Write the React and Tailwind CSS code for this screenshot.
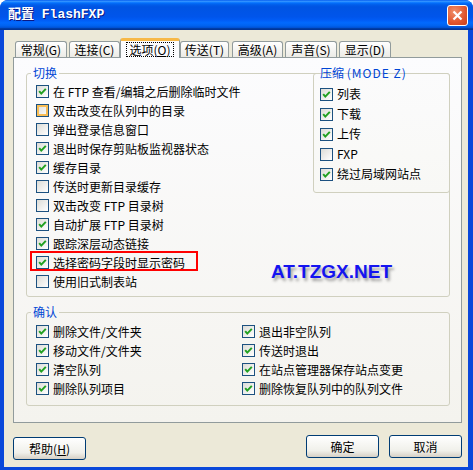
import React from "react";

const switches = [
  { label: "在 FTP 查看/编辑之后删除临时文件", checked: true },
  { label: "双击改变在队列中的目录", checked: false, hot: true },
  { label: "弹出登录信息窗口", checked: false },
  { label: "退出时保存剪贴板监视器状态", checked: true },
  { label: "缓存目录", checked: true },
  { label: "传送时更新目录缓存", checked: false },
  { label: "双击改变 FTP 目录树", checked: false },
  { label: "自动扩展 FTP 目录树", checked: true },
  { label: "跟踪深层动态链接", checked: true },
  { label: "选择密码字段时显示密码", checked: true, marked: true },
  { label: "使用旧式制表站", checked: false },
];

const compress = [
  { label: "列表", checked: true },
  { label: "下载", checked: true },
  { label: "上传", checked: true },
  { label: "FXP", checked: false },
  { label: "绕过局域网站点", checked: true },
];

const confirms = [
  "删除文件/文件夹",
  "退出非空队列",
  "移动文件/文件夹",
  "传送时退出",
  "清空队列",
  "在站点管理器保存站点变更",
  "删除队列项目",
  "删除恢复队列中的队列文件",
];

function Box({ checked, hot }) {
  return (
    <span
      className={`w-[13px] h-[13px] shrink-0 border border-[#1C5180] flex items-center justify-center bg-[linear-gradient(135deg,#DCDCD7,#FFFFFF)] ${
        hot ? "shadow-[inset_0_0_0_2px_#F8BD55]" : ""
      }`}
    >
      {checked && (
        <svg width="11" height="11" viewBox="0 0 11 11">
          <path d="M2.2 5.2 L4.3 7.6 L8.8 2.9" stroke="#21A121" strokeWidth="2" fill="none" />
        </svg>
      )}
    </span>
  );
}

function Row({ label, checked, hot, marked, h = "h-[19px]" }) {
  return (
    <div className={`${h} flex items-center gap-[4px] relative`}>
      <Box checked={checked} hot={hot} />
      <span className="leading-[14px] whitespace-nowrap">{label}</span>
      {/* red annotation box */}
      {marked && <span className="absolute left-[-6px] top-[-2px] w-[168px] h-[20px] border-2 border-[#FF0000]" />}
    </div>
  );
}

function Tab({ children, w, ml, selected }) {
  if (selected) {
    return (
      <div
        className={`${w} ${ml} h-[20px] -mb-[1px] relative z-10 rounded-t-[3px] border-x border-[#919B9C] border-t-[3px] border-t-[#F7B847] bg-[#FCFCFE] flex items-center justify-center`}
      >
        <span className="border border-dotted border-black px-[2px] leading-[13px]">{children}</span>
      </div>
    );
  }
  return (
    <div
      className={`${w} ${ml} h-[16px] rounded-t-[3px] border border-b-0 border-[#919B9C] bg-[linear-gradient(#FFFFFF,#ECEBE6)] flex items-center justify-center leading-[14px]`}
    >
      {children}
    </div>
  );
}

function Button({ children, extra = "" }) {
  return (
    <button
      className={`w-[73px] h-[23px] rounded-[3px] border border-[#003C74] bg-[linear-gradient(#FFFFFF,#F0F0EA_70%,#D6D0C5)] flex items-center justify-center leading-[14px] ${extra}`}
    >
      {children}
    </button>
  );
}

export default function App() {
  return (
    <div className="w-[473px] h-[470px] bg-[#0A48DA] rounded-t-[8px] flex flex-col text-[12px] text-black font-['Noto_Sans_CJK_SC','Noto_Sans',sans-serif]">
      {/* Title bar */}
      <div className="h-[30px] shrink-0 rounded-t-[8px] pl-[8px] pr-[5px] flex items-center justify-between bg-[linear-gradient(to_bottom,#0058EE_0%,#3593FF_4%,#288EFF_6%,#127DFF_8%,#036FFC_10%,#0262EE_14%,#0057E5_20%,#0054E3_24%,#0055EB_56%,#005BF5_66%,#026AFE_76%,#0062EF_86%,#0052D6_92%,#0040AB_94%,#003092_100%)]">
        <span className="text-white font-bold text-[13px] leading-[16px] font-['Liberation_Mono','Noto_Sans_CJK_SC',monospace] [text-shadow:1px_1px_#0A1883]">
          配置 FlashFXP
        </span>
        <span className="w-[21px] h-[21px] rounded-[3px] border border-white bg-[radial-gradient(circle_at_35%_30%,#F0906A,#E0552D_60%,#C8401C)] flex items-center justify-center">
          <svg width="11" height="11" viewBox="0 0 11 11">
            <path d="M1.5 1.5 L9.5 9.5 M9.5 1.5 L1.5 9.5" stroke="white" strokeWidth="2.2" />
          </svg>
        </span>
      </div>

      {/* Dialog body */}
      <div className="flex-1 ml-[4px] mr-[5px] mb-[3px] bg-[#ECE9D8] pt-[8px] pl-[9px] flex flex-col">
        {/* Tabs */}
        <div className="flex items-end h-[19px]">
          <Tab w="w-[52px]" ml="ml-[2px]">常规(G)</Tab>
          <Tab w="w-[51px]" ml="ml-[2px]">连接(C)</Tab>
          <Tab w="w-[60px]" ml="ml-0" selected>
            选项(<u>O</u>)
          </Tab>
          <Tab w="w-[49px]" ml="ml-0">传送(T)</Tab>
          <Tab w="w-[51px]" ml="ml-[3px]">高级(A)</Tab>
          <Tab w="w-[52px]" ml="ml-[2px]">声音(S)</Tab>
          <Tab w="w-[52px]" ml="ml-[2px]">显示(D)</Tab>
        </div>

        {/* Tab page */}
        <div className="w-[449px] h-[366px] border border-[#919B9C] bg-[linear-gradient(#FCFCFE,#F4F3EE)] pt-[8px] px-[12px]">
          {/* 切换 */}
          <div className="relative w-[424px]">
            <fieldset className="border border-[#D0D0BF] rounded-[3px] pl-[9px] pt-[2px] pb-[5px]">
              <legend className="-ml-[5px] px-[2px] leading-[14px] text-[#0046D5]">切换</legend>
              {switches.map((s) => (
                <Row key={s.label} {...s} />
              ))}
            </fieldset>

            {/* 压缩 (MODE Z) */}
            <fieldset className="absolute top-0 right-0 w-[137px] border border-[#D0D0BF] rounded-[3px] pl-[6px] pt-[4px] pb-[8px] bg-[linear-gradient(#FBFBFC,#F8F8F5)]">
              <legend className="-ml-[2px] px-[2px] leading-[14px] text-[#0046D5] whitespace-nowrap">
                压缩 <span className="tracking-[1px]">(MODE Z)</span>
              </legend>
              {compress.map((c) => (
                <Row key={c.label} {...c} h="h-[20px]" />
              ))}
            </fieldset>

            {/* watermark */}
            <span className="absolute left-[245px] top-[196px] text-[19px] leading-[19px] font-bold font-['Liberation_Sans',sans-serif] text-[#1414F0] [text-shadow:2px_3px_3px_rgba(0,0,0,0.35)]">
              AT.TZGX.NET
            </span>
          </div>

          {/* 确认 */}
          <fieldset className="mt-[8px] w-[424px] border border-[#D0D0BF] rounded-[3px] pl-[9px] pt-[3px] pb-[7px]">
            <legend className="-ml-[5px] px-[2px] leading-[14px] text-[#0046D5]">确认</legend>
            <div className="grid grid-cols-[206px_1fr]">
              {confirms.map((c) => (
                <Row key={c} label={c} checked />
              ))}
            </div>
          </fieldset>
        </div>

        {/* Buttons */}
        <div className="w-[449px] mt-[12px] flex items-start justify-between">
          <Button extra="mt-[2px]">
            帮助(<u>H</u>)
          </Button>
          <div className="flex gap-[10px]">
            <Button>确定</Button>
            <Button>取消</Button>
          </div>
        </div>
      </div>
    </div>
  );
}
